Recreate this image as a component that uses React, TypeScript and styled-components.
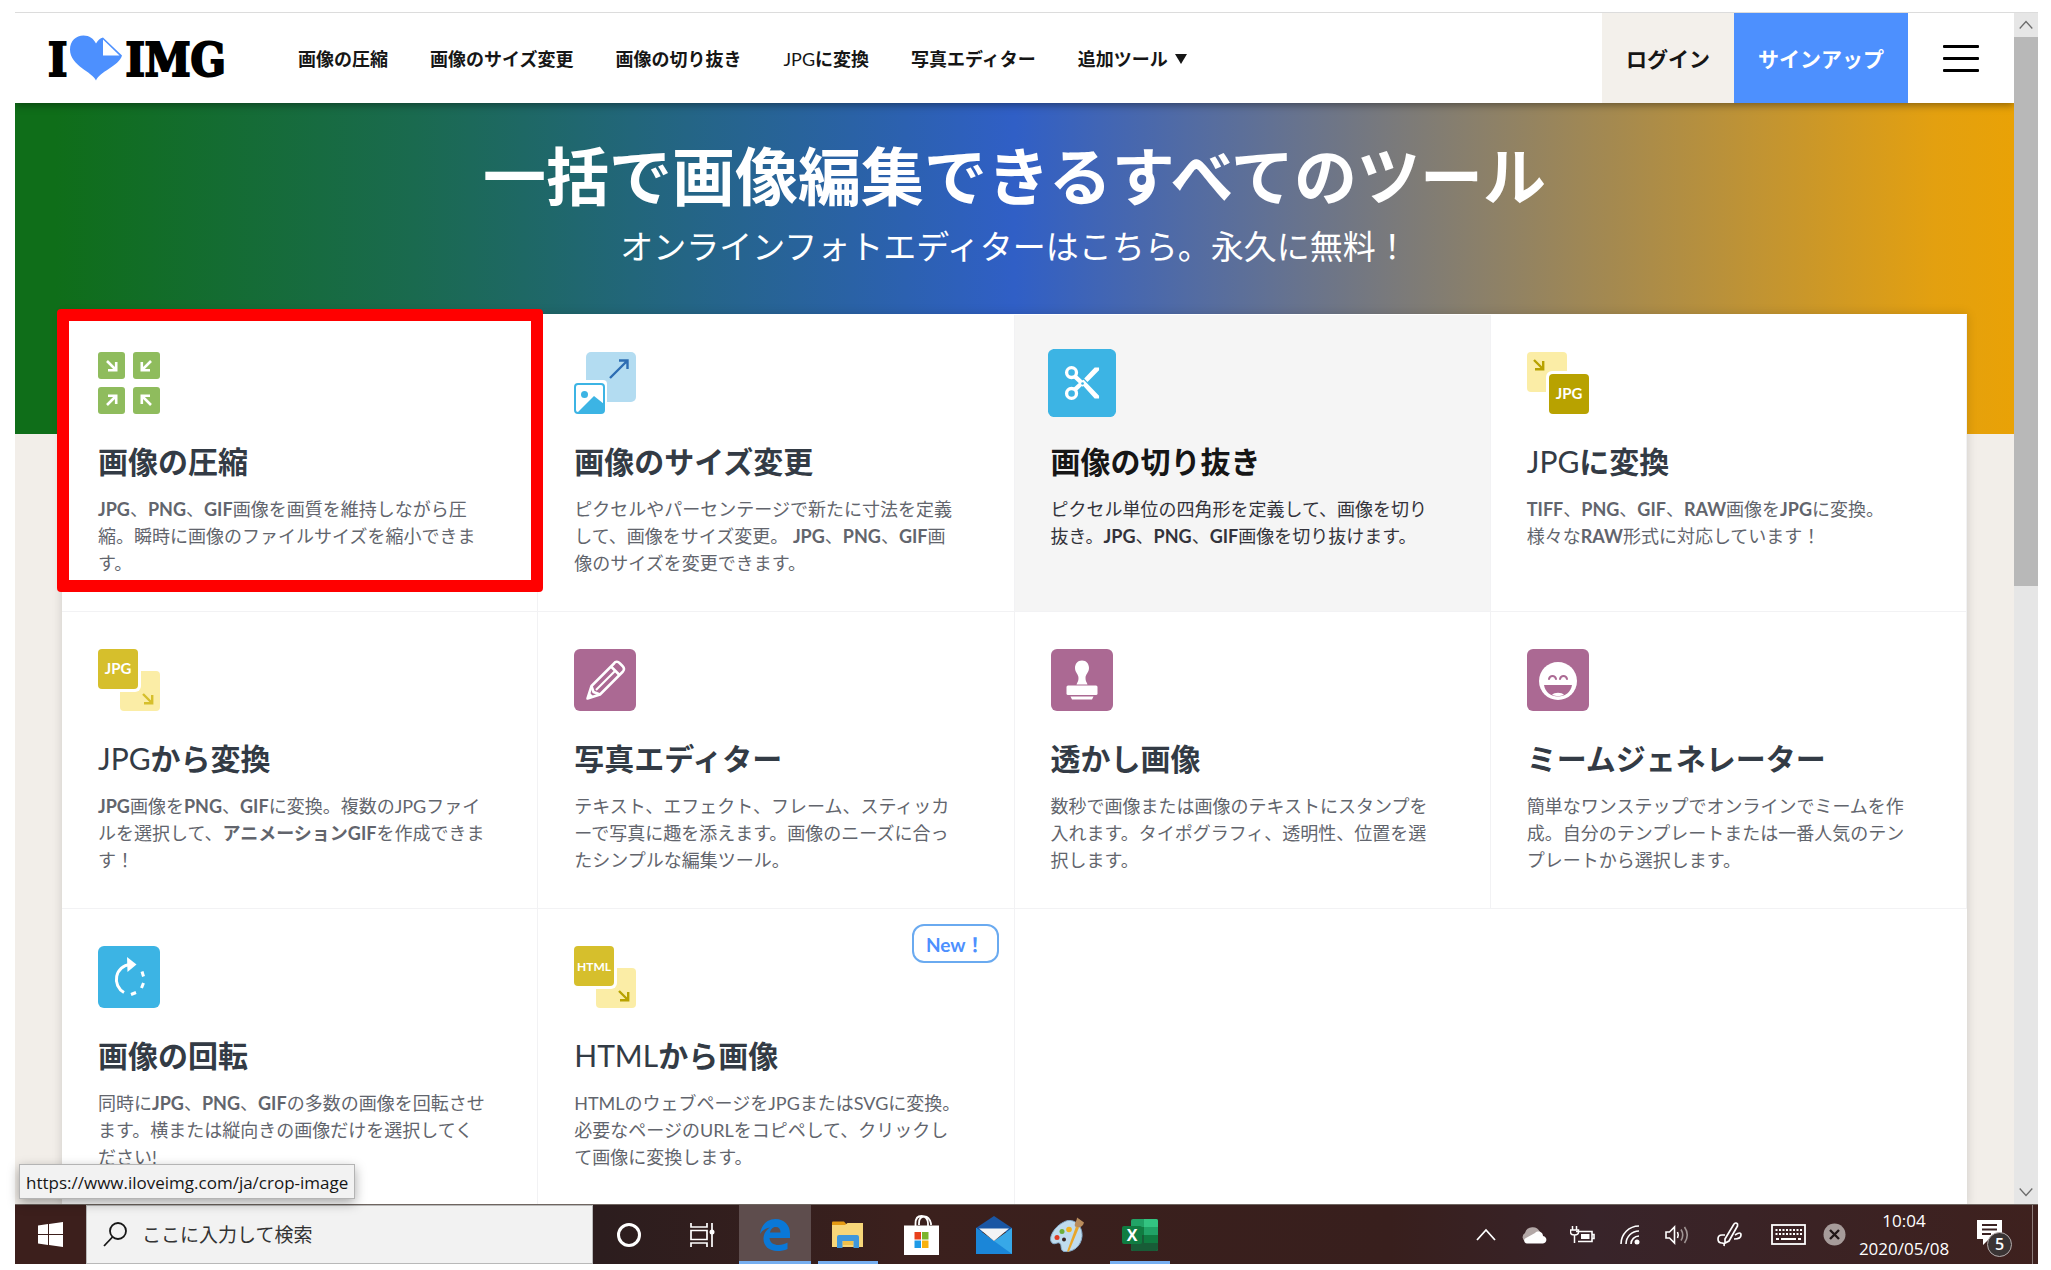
import React from "react";
import styled, { createGlobalStyle, css } from "styled-components";

const jp = `"Lato", "Noto Sans CJK JP", sans-serif`;
const system = `"Open Sans", "Noto Sans CJK JP", sans-serif`;
const blue = "#4d90fe";
const sky = "#3cb4e4";
const plum = "#ab6993";
const gold = "#d6bf2c";
const olive = "#b8a200";
const cream = "#fbeda6";

const GlobalStyle = createGlobalStyle`
  *, *::before, *::after { box-sizing: border-box; }
  body { margin: 0; background: #fff; font-family: ${jp}; color: #161616; }
  a { color: inherit; text-decoration: none; }
  button { font: inherit; color: inherit; border: 0; background: none; padding: 0; cursor: pointer; }
  svg { display: block; }
`;

const Desktop = styled.div`
  display: flex;
  flex-direction: column;
  height: 100vh;
  padding: 12px 13px 6px 15px;
`;

const BrowserWindow = styled.div`
  flex: 1;
  min-height: 0;
  display: flex;
  border-top: 1px solid #dcdcdc;
  position: relative;
`;

const Viewport = styled.div`
  flex: 1;
  min-width: 0;
  overflow: hidden;
  background: #f2eee9;
`;

const ScrollBar = styled.div`
  width: 24px;
  display: flex;
  flex-direction: column;
  background: #e6e6e6;
`;

const ScrollButton = styled.button`
  height: 24px;
  display: grid;
  place-items: center;
`;

const ScrollTrack = styled.div`
  flex: 1;
`;

const ScrollThumb = styled.div`
  height: 48%;
  background: #b8b8b8;
`;

/* ---------- header ---------- */

const Header = styled.header`
  position: relative;
  z-index: 1;
  height: 90px;
  display: flex;
  align-items: stretch;
  background: #fff;
  box-shadow: 0 2px 8px rgba(0, 0, 0, 0.4);
`;

const Logo = styled.a`
  width: 248px;
  padding-left: 33px;
  display: flex;
  align-items: center;
  gap: 3px;
  font-family: "DejaVu Serif Condensed", "DejaVu Serif", serif;
  font-weight: 700;
  font-size: 46px;
  line-height: 56px;
  color: #000;
`;

const LogoText = styled.span`
  padding-top: 3px;
  -webkit-text-stroke: 2px #000;
`;

const Nav = styled.nav`
  flex: 1;
  display: flex;
  align-items: center;
  gap: 42px;
  padding: 2px 0 0 35px;
  font-size: 18px;
  font-weight: 700;
  line-height: 28px;
  color: #161616;
  white-space: nowrap;
`;

const NavMore = styled.button`
  display: flex;
  align-items: center;
  gap: 7px;
`;

const Thin = styled.span`
  font-weight: 400;
`;

const HeaderLink = styled.a<{ $primary?: boolean }>`
  display: flex;
  align-items: center;
  padding: 0 24px;
  font-size: 21px;
  font-weight: 700;
  background: ${(p) => (p.$primary ? blue : "#f3f0eb")};
  color: ${(p) => (p.$primary ? "#fff" : "#161616")};
`;

const MenuButton = styled.button`
  width: 106px;
  display: flex;
  flex-direction: column;
  align-items: center;
  justify-content: center;
  gap: 9px;
`;

const MenuBar = styled.span`
  width: 36px;
  height: 3px;
  border-radius: 1px;
  background: #000;
`;

/* ---------- hero ---------- */

const Hero = styled.section`
  padding: 36px 24px 165px;
  text-align: center;
  color: #fff;
  background: linear-gradient(90deg, #0f6e19 2%, #1a6a4f 20%, #305fc6 50%, #e3a010 96%, #e9a206 100%);
`;

const HeroTitle = styled.h1`
  margin: 0 0 10px;
  font-size: 63px;
  line-height: 74px;
  font-weight: 700;
`;

const HeroText = styled.h2`
  margin: 0;
  font-size: 33px;
  line-height: 46px;
  font-weight: 400;
`;

/* ---------- tools ---------- */

const Tools = styled.main`
  position: relative;
  margin: -120px 47px 0;
  padding-top: 1px;
  display: grid;
  grid-template-columns: repeat(4, 1fr);
  grid-auto-rows: 297px;
  background: #fff;
  box-shadow: 0 0 10px rgba(0, 0, 0, 0.15);
`;

const IconBox = styled.div`
  width: 62px;
  height: 62px;
  margin-bottom: 30px;
`;

const ToolTitle = styled.h3`
  margin: 0 0 18px;
  font-size: 30px;
  line-height: 34px;
  font-weight: 700;
  color: #333b45;
`;

const ToolText = styled.p`
  margin: 0;
  font-size: 18px;
  line-height: 27px;
  color: #62656d;
  white-space: nowrap;
`;

const ToolCard = styled.a<{ $hovered?: boolean }>`
  position: relative;
  display: block;
  padding: 37px 36px;
  border-right: 1px solid #f2f2f4;
  border-bottom: 1px solid #f2f2f4;

  ${(p) =>
    p.$hovered &&
    css`
      background: #f5f5f5;
      ${IconBox} { transform: scale(1.1); }
      ${ToolTitle} { color: #161616; }
      ${ToolText} { color: #33333b; }
    `}
`;

const Badge = styled.span`
  position: absolute;
  top: 15px;
  right: 15px;
  height: 39px;
  padding: 1px 12px 0 12px;
  border: 2px solid #6aaaf0;
  border-radius: 12px;
  font-size: 19px;
  line-height: 36px;
  font-weight: 700;
  color: ${blue};
`;

const Highlight = styled.div`
  position: absolute;
  top: -5px;
  left: -5px;
  width: calc(25% + 10px);
  height: 283px;
  border: 12px solid #f00;
  border-radius: 4px;
  pointer-events: none;
`;

const StatusBubble = styled.div`
  position: absolute;
  left: 4px;
  bottom: 5px;
  z-index: 2;
  height: 35px;
  padding: 0 6px;
  border: 1px solid #b4b4b4;
  background: #f2f2f2;
  box-shadow: 0 4px 12px rgba(0, 0, 0, 0.35);
  font-family: ${system};
  font-size: 17px;
  line-height: 35px;
  color: #161616;
`;

/* ---------- task bar ---------- */

const TaskBar = styled.footer`
  height: 60px;
  display: flex;
  color: #fff;
  font-family: ${system};
  border-top: 1px solid #6f6560;
  background: linear-gradient(90deg, #3c1f1c 4%, #2c1d1e 29%, #3b201d 44%, #381f1d 68%, #38242a 78%, #3e211e 100%);
`;

const StartButton = styled.button`
  width: 71px;
  display: grid;
  place-items: center;
`;

const SearchBox = styled.label`
  width: 507px;
  display: flex;
  align-items: center;
  gap: 15px;
  padding-left: 16px;
  background: #f2f2f2;
  border: 1px solid #b9b9b9;
`;

const SearchInput = styled.input`
  flex: 1;
  min-width: 0;
  border: 0;
  outline: 0;
  padding: 0;
  background: transparent;
  font-family: ${system};
  font-size: 19px;
  color: #333;
  &::placeholder { color: #333; opacity: 1; }
`;

const Apps = styled.div`
  flex: 1;
  display: flex;
  gap: 1px;
`;

const AppButton = styled.button<{ $state?: "active" | "open" }>`
  width: 72px;
  display: grid;
  place-items: center;
  position: relative;
  background: ${(p) => (p.$state === "active" ? "#5e4d4d" : "transparent")};

  &::after {
    content: "";
    display: ${(p) => (p.$state ? "block" : "none")};
    position: absolute;
    bottom: 0;
    left: ${(p) => (p.$state === "active" ? 0 : 6)}px;
    right: ${(p) => (p.$state === "active" ? 0 : 6)}px;
    height: 3px;
    background: #76aff0;
  }
`;

const Tray = styled.div`
  display: flex;
  align-items: stretch;
`;

const TrayButton = styled.button<{ $width?: number }>`
  width: ${(p) => p.$width ?? 48}px;
  display: grid;
  place-items: center;
`;

const Clock = styled.button`
  width: 108px;
  font-size: 17px;
  line-height: 28px;
`;

const ActionCenter = styled(TrayButton)`
  position: relative;
`;

const Count = styled.span`
  position: absolute;
  left: 29px;
  top: 27px;
  width: 25px;
  height: 25px;
  border: 1px solid #b5adad;
  border-radius: 50%;
  background: #3a3434;
  font-size: 16px;
  line-height: 23px;
  font-weight: 600;
`;

const ShowDesktop = styled.button`
  width: 6px;
  border-left: 1px solid #8d7d7b;
`;

/* ---------- drawings ---------- */

const Svg = ({ w, h = w, children, box }: { w: number; h?: number; box?: string; children: React.ReactNode }) => (
  <svg width={w} height={h} viewBox={box ?? `0 0 ${w} ${h}`} fill="none" aria-hidden="true">
    {children}
  </svg>
);

const Heart = () => (
  <Svg w={52} h={46}>
    <path d="M26 45.5C23 37 0 31 0 14.500C0 6 6 .5 13.500 .5c6 0 10 3 12.500 8C28 5 30 3.500 33 2.500L52 20.500C49 31 29 37 26 45.500Z" fill={blue} />
    <path d="M33 4.500V20.500H49.500Z" fill="#fff" />
  </Svg>
);

const Tile = ({ color, children }: { color: string; children: React.ReactNode }) => (
  <Svg w={62}>
    <rect width="62" height="62" rx="6" fill={color} />
    {children}
  </Svg>
);

const CompressIcon = () => (
  <Svg w={62}>
    {[[0, 0], [35, 0], [0, 35], [35, 35]].map(([x, y]) => (
      <rect key={`${x}-${y}`} x={x} y={y} width="27" height="27" rx="3" fill="#8fbc5d" />
    ))}
    <g stroke="#fff" strokeWidth="2.600">
      <path d="M9 9L18 18M10 18.200H18.200V10" />
      <path d="M53 9L44 18M52 18.200H43.800V10" />
      <path d="M9 53L18 44M10 43.800H18.200V52" />
      <path d="M53 53L44 44M52 43.800H43.800V52" />
    </g>
  </Svg>
);

const ResizeIcon = () => (
  <Svg w={62}>
    <rect x="12" width="50" height="50" rx="5" fill="#b3dcf1" />
    <path d="M36 26L53 9M45 8.500H53.500V17" stroke="#2d6db3" strokeWidth="2.400" />
    <rect x="-3" y="28" width="36" height="37" rx="4" fill="#fff" />
    <rect x="1" y="32" width="29" height="29" rx="3" fill="#fff" stroke={sky} strokeWidth="2" />
    <circle cx="10.500" cy="42.500" r="3.500" fill={sky} />
    <path d="M3 61L20 44L30 52V61Z" fill={sky} />
  </Svg>
);

const CropIcon = () => (
  <Tile color={sky}>
    <g stroke="#fff">
      <circle cx="21.500" cy="21.500" r="4.500" strokeWidth="3" />
      <circle cx="21.500" cy="40.500" r="4.500" strokeWidth="3" />
      <path d="M24.500 25L33 33" strokeWidth="4" />
      <path d="M24.500 37L31 31" strokeWidth="4" />
    </g>
    <path d="M29 30L32.500 28L46.500 42.500V45H42.500ZM33 27L42.500 17H46.500V19.500L36 30Z" fill="#fff" />
    <circle cx="31.500" cy="31.500" r="1.200" fill={sky} />
  </Tile>
);

const ToJpgIcon = () => (
  <Svg w={62}>
    <rect width="40" height="40" rx="4" fill={cream} />
    <path d="M7 8L16 17M8 17.200H16.200V9" stroke={olive} strokeWidth="2.400" />
    <rect x="19" y="19" width="46" height="46" rx="6" fill="#fff" />
    <rect x="22" y="22" width="40" height="40" rx="4" fill={olive} />
    <text x="42" y="47" textAnchor="middle" fontSize="15" fontWeight="700" fill="#fff">JPG</text>
  </Svg>
);

const FromIcon = ({ label, arrow, size }: { label: string; arrow: string; size: number }) => (
  <Svg w={62}>
    <rect x="22" y="22" width="40" height="40" rx="4" fill={cream} />
    <path d="M45 45L54 54M46 54.200H54.200V46" stroke={arrow} strokeWidth="2.400" />
    <rect x="-3" y="-3" width="46" height="46" rx="6" fill="#fff" />
    <rect width="40" height="40" rx="4" fill={gold} />
    <text x="20" y="25" textAnchor="middle" fontSize={size} fontWeight="700" fill="#fff">{label}</text>
  </Svg>
);

const PencilIcon = () => (
  <Tile color={plum}>
    <g stroke="#fff" strokeWidth="2.500" strokeLinejoin="round">
      <path d="M13.500 49.500L17.500 37L40 14.500C41.500 12 44 12.500 46 14.500L48.500 17C50.500 19 50.500 21 48.500 23L26 45.500Z" />
      <path d="M17.500 37L19.500 43L26 45.500M37 17.500L45.500 26" />
      <path d="M22 41L41 22" strokeWidth="2.200" />
    </g>
    <path d="M13 50L15 43L20 48Z" fill="#fff" />
  </Tile>
);

const StampIcon = () => (
  <Tile color={plum}>
    <path d="M31 11.500c4.500 0 7 3.500 7 7.500 0 4.500-3.500 6-3.500 10 0 3 1 4 2 6.500H25.500c1-2.500 2-3.500 2-6.500 0-4-3.500-5.500-3.500-10 0-4 2.500-7.500 7-7.500Z" fill="#fff" />
    <rect x="15.500" y="36.500" width="31" height="9.500" rx="1.500" fill="#fff" />
    <path d="M19.500 47.500H42.500L41 50.500H21Z" fill="#fff" />
  </Tile>
);

const MemeIcon = () => (
  <Tile color={plum}>
    <circle cx="31" cy="32" r="19" fill="#fff" />
    <path d="M22 30c1-4 6-4 7 0M33 30c1-4 6-4 7 0" stroke={plum} strokeWidth="2" strokeLinecap="round" />
    <path d="M17 36H45C44 43 38 47.500 31 47.500S18 43 17 36Z" fill={plum} />
    <path d="M25 46c2-3 10-3 12 0-4 1.500-8 1.500-12 0Z" fill="#fff" />
  </Tile>
);

const RotateIcon = () => (
  <Tile color={sky}>
    <path d="M32 18.500A15 15 0 0 0 26 46.500" stroke="#fff" strokeWidth="3" />
    <path d="M29 11L38.500 18.500L29.500 26Z" fill="#fff" />
    <path d="M44 25.500l1.500 5M45.500 37l-2 5M38 46.500l-5 2" stroke="#fff" strokeWidth="3" />
  </Tile>
);

const WindowsIcon = () => (
  <Svg w={25}>
    <path d="M0 3.500L10 2V12H0ZM11 1.900L25 0V12H11ZM0 13H10V23L0 21.500ZM11 13H25V25L11 23.100Z" fill="#fff" />
  </Svg>
);

const SearchIcon = () => (
  <Svg w={24} h={25}>
    <circle cx="15" cy="9" r="8" stroke="#161616" strokeWidth="1.800" />
    <path d="M9.500 15L1 24" stroke="#161616" strokeWidth="1.800" />
  </Svg>
);

const CortanaIcon = () => (
  <Svg w={26}>
    <circle cx="13" cy="13" r="10.500" stroke="#fff" strokeWidth="3" />
  </Svg>
);

const TaskViewIcon = () => (
  <Svg w={25} h={24}>
    <path d="M1 0V4H17V0M1 24V20H17V24M1 7.500H17V16.500H1ZM22 0V24" stroke="#fff" strokeWidth="1.700" />
    <circle cx="22" cy="9" r="2.500" fill="#fff" />
  </Svg>
);

const EdgeIcon = () => (
  <Svg w={30} h={32}>
    <path d="M0 15C1.500 5 8 0 15.500 0 24.500 0 30 6.500 30 14.500V19H9.500C10 24 14 26 18.500 26c3.500 0 6.500-1 9-2.500V30c-3 1.500-6.500 2-10 2C9 32 3.500 27 3.500 20 3.500 15 6 11 10 8.500 6 9 2.500 11 0 15ZM10 13.500H20.500C20.500 10 19 8 15.800 8 12.500 8 10.500 10.500 10 13.500Z" fill="#0a78d7" />
  </Svg>
);

const FolderIcon = () => (
  <Svg w={32} h={28}>
    <path d="M0 1.500Q0 .5 1 .5H12L15 4H0Z" fill="#e59a12" />
    <path d="M0 4H13L15.500 2H31V26H0Z" fill="#f7d679" />
    <path d="M5 27V16Q5 14 7 14H25Q27 14 27 16V27H21.500V20H10.500V27Z" fill="#3e97dc" />
    <path d="M11 20H21V24H11Z" fill="#efc04c" />
  </Svg>
);

const StoreIcon = () => (
  <Svg w={35} h={40}>
    <path d="M11.500 11V8.500Q11.500 1 17.500 1T24 8.500V11M15 10V8Q15 2 20 1.500T27 8.500V10" stroke="#fff" strokeWidth="1.800" />
    <path d="M0 10.500H35V40H0Z" fill="#fff" />
    <path d="M10.500 17H17V24.500H10.500Z" fill="#e8401c" />
    <path d="M18 17H24.500V24.500H18Z" fill="#7cb52c" />
    <path d="M10.500 25.500H17V33H10.500Z" fill="#1f9ae6" />
    <path d="M18 25.500H24.500V33H18Z" fill="#f8b10e" />
  </Svg>
);

const MailIcon = () => (
  <Svg w={36} h={38}>
    <path d="M0 12L18 0L36 12V16H0Z" fill="#1a56a4" />
    <path d="M0 12V38H36V12L18 25Z" fill="#37a8e8" />
    <path d="M0 38V12L36 38Z" fill="#1b86d8" />
    <path d="M3 12.500H33L18 25Z" fill="#f3f4f6" />
  </Svg>
);

const PaintIcon = () => (
  <Svg w={34} h={38} box="0 0 34 35">
    <path d="M13 5C22-1 33 7 32 19 31 29 23 35 14 34c-4-1-2-6-4-8s-4 1-7 0c-6-3 0-16 10-21Z" fill="#bfdcef" stroke="#86abc9" />
    <circle cx="7" cy="20" r="2.500" fill="#df3b24" />
    <circle cx="12" cy="14" r="2.500" fill="#6caf3c" />
    <circle cx="19" cy="12" r="2.800" fill="#f0b323" />
    <circle cx="14" cy="22" r="2" fill="#3a2424" />
    <path d="M17 34L26 9L29 10L19 34Z" fill="#e9a62b" />
    <path d="M25 9C24 5 27 4 27 0L34 5C33 8 32 9 29 10Z" fill="#b98c5c" />
  </Svg>
);

const ExcelIcon = () => (
  <Svg w={36} h={32}>
    <rect x="9" width="27" height="32" rx="2" fill="#21a366" />
    <path d="M9 16H36V30Q36 32 34 32H11Q9 32 9 30Z" fill="#185c37" />
    <path d="M9 8H22V16H9ZM22 16H36V24H22Z" fill="#107c41" />
    <path d="M22 0H34Q36 0 36 2V8H22Z" fill="#33c481" />
    <rect y="7" width="20" height="18" rx="2" fill="#107c41" />
    <text x="10" y="22" textAnchor="middle" fontSize="16" fontWeight="700" fill="#fff">X</text>
  </Svg>
);

const Chevron = ({ color, down, w = 14 }: { color: string; down?: boolean; w?: number }) => (
  <Svg w={w} h={w} box="0 0 20 20">
    <path d={down ? "M1 5L10 15L19 5" : "M1 15L10 5L19 15"} stroke={color} strokeWidth="1.800" />
  </Svg>
);

const CloudIcon = () => (
  <Svg w={26} h={18}>
    <path d="M5 16A5 5 0 0 1 4 7 8 8 0 0 1 19 6L10 16Z" fill="#b3a8a7" />
    <path d="M6 17.500C3 17.500 2 13 5 12L14 7C17 4 22 6 22 10 27 11 26 17.500 22 17.500Z" fill="#fff" />
  </Svg>
);

const BatteryIcon = () => (
  <Svg w={25} h={18}>
    <path d="M6 5.500H22V15.500H8M22 8.500H24V12.500H22" stroke="#fff" strokeWidth="1.600" />
    <path d="M11 8H19.500V13H11Z" fill="#fff" />
    <path d="M2.500 0V4M6.500 0V4M.5 4H8.500V6Q8.500 9 4.500 9T.5 6ZM4.500 9V17" stroke="#fff" strokeWidth="1.500" />
  </Svg>
);

const WifiIcon = () => (
  <Svg w={20}>
    <path d="M1 19A18 18 0 0 1 19 1M6 19A13 13 0 0 1 19 6M11 19A8 8 0 0 1 19 11" stroke="#fff" strokeWidth="1.600" />
    <circle cx="17" cy="17" r="2.500" fill="#fff" />
  </Svg>
);

const VolumeIcon = () => (
  <Svg w={25} h={20}>
    <path d="M1 7H4.500L9.500 2V18L4.500 13H1Z" stroke="#fff" strokeWidth="1.600" />
    <path d="M12.500 7Q14 10 12.500 13" stroke="#fff" strokeWidth="1.600" />
    <path d="M16 4.500Q19.500 10 16 15.500M19.500 2Q25 10 19.500 18" stroke="#a09594" strokeWidth="1.600" />
  </Svg>
);

const PenIcon = () => (
  <Svg w={25}>
    <path d="M8 17L17 2Q19 0 20.500 2L20.500 4L12 19L8 21ZM18 13Q24 9 24 13T17 17M8 13H5Q1 13 1 17T5 21Q8 21 7 24" stroke="#fff" strokeWidth="1.700" />
  </Svg>
);

const KeyboardIcon = () => (
  <Svg w={35} h={23} box="0 0 35 21">
    <rect x="1" y="1" width="33" height="19" stroke="#fff" strokeWidth="1.800" />
    <path d="M4.500 6H31M4.500 10H31" stroke="#fff" strokeWidth="2" strokeDasharray="2 1.500" />
    <path d="M5 15H8M10 15H25M27 15H30" stroke="#fff" strokeWidth="2" />
  </Svg>
);

const ErrorIcon = () => (
  <Svg w={23}>
    <circle cx="11.500" cy="11.500" r="11" fill="#a69b9a" />
    <path d="M7 7L16 16M16 7L7 16" stroke="#201617" strokeWidth="2.400" />
  </Svg>
);

const MessageIcon = () => (
  <Svg w={36} h={36}>
    <path d="M0 3H25V22H12L6 28V22H0Z" fill="#fff" />
    <path d="M5 8H20M5 12.500H20M5 17H14" stroke="#3a2222" strokeWidth="1.800" />
  </Svg>
);

/* ---------- data ---------- */

type Tool = {
  icon: React.ReactNode;
  prefix?: string;
  title: string;
  lines: string[];
  hovered?: boolean;
  isNew?: boolean;
};

const tools: Tool[] = [
  {
    icon: <CompressIcon />,
    title: "画像の圧縮",
    lines: ["*JPG*、*PNG*、*GIF*画像を画質を維持しながら圧", "縮。瞬時に画像のファイルサイズを縮小できま", "す。"],
  },
  {
    icon: <ResizeIcon />,
    title: "画像のサイズ変更",
    lines: ["ピクセルやパーセンテージで新たに寸法を定義", "して、画像をサイズ変更。 *JPG*、*PNG*、*GIF*画", "像のサイズを変更できます。"],
  },
  {
    icon: <CropIcon />,
    title: "画像の切り抜き",
    hovered: true,
    lines: ["ピクセル単位の四角形を定義して、画像を切り", "抜き。*JPG*、*PNG*、*GIF*画像を切り抜けます。"],
  },
  {
    icon: <ToJpgIcon />,
    prefix: "JPG",
    title: "に変換",
    lines: ["*TIFF*、*PNG*、*GIF*、*RAW*画像を*JPG*に変換。", "様々な*RAW*形式に対応しています！"],
  },
  {
    icon: <FromIcon label="JPG" arrow={gold} size={15} />,
    prefix: "JPG",
    title: "から変換",
    lines: ["*JPG*画像を*PNG*、*GIF*に変換。複数のJPGファイ", "ルを選択して、*アニメーションGIF*を作成できま", "す！"],
  },
  {
    icon: <PencilIcon />,
    title: "写真エディター",
    lines: ["テキスト、エフェクト、フレーム、スティッカ", "ーで写真に趣を添えます。画像のニーズに合っ", "たシンプルな編集ツール。"],
  },
  {
    icon: <StampIcon />,
    title: "透かし画像",
    lines: ["数秒で画像または画像のテキストにスタンプを", "入れます。タイポグラフィ、透明性、位置を選", "択します。"],
  },
  {
    icon: <MemeIcon />,
    title: "ミームジェネレーター",
    lines: ["簡単なワンステップでオンラインでミームを作", "成。自分のテンプレートまたは一番人気のテン", "プレートから選択します。"],
  },
  {
    icon: <RotateIcon />,
    title: "画像の回転",
    lines: ["同時に*JPG*、*PNG*、*GIF*の多数の画像を回転させ", "ます。横または縦向きの画像だけを選択してく", "ださい!"],
  },
  {
    icon: <FromIcon label="HTML" arrow={olive} size={12} />,
    prefix: "HTML",
    title: "から画像",
    isNew: true,
    lines: ["HTMLのウェブページをJPGまたはSVGに変換。", "必要なページのURLをコピペして、クリックし", "て画像に変換します。"],
  },
];

const RichLine = ({ text }: { text: string }) => (
  <>{text.split("*").map((part, i) => (i % 2 ? <strong key={i}>{part}</strong> : part))}</>
);

export default function App() {
  return (
    <>
      <GlobalStyle />
      <Desktop>
        <BrowserWindow>
          <Viewport>
            <Header>
              <Logo href="#" aria-label="I love IMG">
                <LogoText>I</LogoText>
                <Heart />
                <LogoText>IMG</LogoText>
              </Logo>
              <Nav>
                <a href="#">画像の圧縮</a>
                <a href="#">画像のサイズ変更</a>
                <a href="#">画像の切り抜き</a>
                <a href="#"><Thin>JPG</Thin>に変換</a>
                <a href="#">写真エディター</a>
                <NavMore type="button">
                  追加ツール
                  <Svg w={12} h={10}><path d="M0 0H12L6 10Z" fill="#161616" /></Svg>
                </NavMore>
              </Nav>
              <HeaderLink href="#">ログイン</HeaderLink>
              <HeaderLink href="#" $primary>サインアップ</HeaderLink>
              <MenuButton type="button" aria-label="メニュー">
                <MenuBar />
                <MenuBar />
                <MenuBar />
              </MenuButton>
            </Header>
            <Hero>
              <HeroTitle>一括で画像編集できるすべてのツール</HeroTitle>
              <HeroText>オンラインフォトエディターはこちら。永久に無料！</HeroText>
            </Hero>
            <Tools>
              {tools.map((tool) => (
                <ToolCard href="#" key={(tool.prefix ?? "") + tool.title} $hovered={tool.hovered}>
                  {tool.isNew && <Badge>New！</Badge>}
                  <IconBox>{tool.icon}</IconBox>
                  <ToolTitle>
                    {tool.prefix && <Thin>{tool.prefix}</Thin>}
                    {tool.title}
                  </ToolTitle>
                  <ToolText>
                    {tool.lines.map((line, i) => (
                      <React.Fragment key={line}>
                        {i > 0 && <br />}
                        <RichLine text={line} />
                      </React.Fragment>
                    ))}
                  </ToolText>
                </ToolCard>
              ))}
              <Highlight />
            </Tools>
          </Viewport>
          <ScrollBar>
            <ScrollButton type="button" aria-label="上へスクロール"><Chevron color="#6b6b6b" /></ScrollButton>
            <ScrollTrack><ScrollThumb /></ScrollTrack>
            <ScrollButton type="button" aria-label="下へスクロール"><Chevron color="#6b6b6b" down /></ScrollButton>
          </ScrollBar>
          <StatusBubble>https://www.iloveimg.com/ja/crop-image</StatusBubble>
        </BrowserWindow>
        <TaskBar>
          <StartButton type="button" aria-label="スタート"><WindowsIcon /></StartButton>
          <SearchBox>
            <SearchIcon />
            <SearchInput type="text" placeholder="ここに入力して検索" aria-label="ここに入力して検索" />
          </SearchBox>
          <Apps>
            <AppButton type="button" aria-label="Cortana"><CortanaIcon /></AppButton>
            <AppButton type="button" aria-label="タスク ビュー"><TaskViewIcon /></AppButton>
            <AppButton type="button" aria-label="Edge" $state="active"><EdgeIcon /></AppButton>
            <AppButton type="button" aria-label="エクスプローラー" $state="open"><FolderIcon /></AppButton>
            <AppButton type="button" aria-label="ストア"><StoreIcon /></AppButton>
            <AppButton type="button" aria-label="メール"><MailIcon /></AppButton>
            <AppButton type="button" aria-label="ペイント"><PaintIcon /></AppButton>
            <AppButton type="button" aria-label="Excel" $state="open"><ExcelIcon /></AppButton>
          </Apps>
          <Tray>
            <TrayButton type="button" aria-label="隠れているインジケーター"><Chevron color="#fff" w={20} /></TrayButton>
            <TrayButton type="button" aria-label="OneDrive"><CloudIcon /></TrayButton>
            <TrayButton type="button" aria-label="バッテリー"><BatteryIcon /></TrayButton>
            <TrayButton type="button" aria-label="ネットワーク"><WifiIcon /></TrayButton>
            <TrayButton type="button" aria-label="音量" $width={46}><VolumeIcon /></TrayButton>
            <TrayButton type="button" aria-label="ペン" $width={58}><PenIcon /></TrayButton>
            <TrayButton type="button" aria-label="タッチ キーボード" $width={60}><KeyboardIcon /></TrayButton>
            <TrayButton type="button" aria-label="エラー" $width={32}><ErrorIcon /></TrayButton>
            <Clock type="button">10:04<br />2020/05/08</Clock>
            <ActionCenter type="button" aria-label="通知" $width={74}>
              <MessageIcon />
              <Count>5</Count>
            </ActionCenter>
            <ShowDesktop type="button" aria-label="デスクトップの表示" />
          </Tray>
        </TaskBar>
      </Desktop>
    </>
  );
}
